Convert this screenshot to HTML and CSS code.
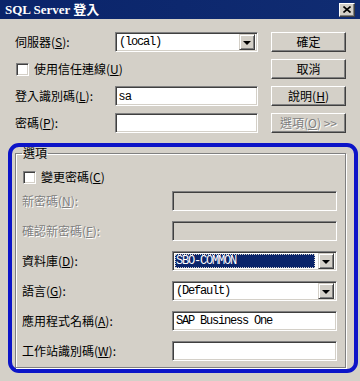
FILE: index.html
```html
<!DOCTYPE html>
<html lang="zh-Hant">
<head>
    <meta charset="UTF-8" />
    <title>SQL Server 登入</title>
    <link rel="stylesheet" href="styles.css">
</head>
<body>
    <div class="titlebar">
        <span class="title">SQL Server 登入</span>
        <span class="close">
            <svg width="8" height="7" viewBox="0 0 8 7"><path d="M0.5 0.5 L7.5 6.5 M7.5 0.5 L0.5 6.5" stroke="#000" stroke-width="1.6"/></svg>
        </span>
    </div>

    <!-- Anmeldung -->
    <div class="login">
        <span class="lbl">伺服器(<u>S</u>):</span>
        <div class="combo sunken"><span class="val mono">(local)</span><span class="arrow"></span></div>
        <span class="btn">確定</span>

        <span class="check span2"><span class="box sunken"></span><span>使用信任連線(<u>U</u>)</span></span>
        <span class="btn">取消</span>

        <span class="lbl">登入識別碼(<u>L</u>):</span>
        <div class="field sunken"><span class="val sans">sa</span></div>
        <span class="btn">說明(<u>H</u>)</span>

        <span class="lbl">密碼(<u>P</u>):</span>
        <div class="field sunken"></div>
        <span class="btn off">選項(<u>O</u>) &gt;&gt;</span>
    </div>

    <!-- Optionen -->
    <div class="mark">
        <fieldset class="options">
            <legend>選項</legend>
            <span class="check"><span class="box sunken"></span><span>變更密碼(<u>C</u>)</span></span>
            <div class="rows">
                <span class="lbl off">新密碼(<u>N</u>):</span>
                <div class="field sunken grey"></div>

                <span class="lbl off">確認新密碼(<u>F</u>):</span>
                <div class="field sunken grey"></div>

                <span class="lbl">資料庫(<u>D</u>):</span>
                <div class="combo sunken"><span class="val mono sel">SBO-COMMON</span><span class="arrow"></span></div>

                <span class="lbl">語言(<u>G</u>):</span>
                <div class="combo sunken"><span class="val mono">(Default)</span><span class="arrow"></span></div>

                <span class="lbl">應用程式名稱(<u>A</u>):</span>
                <div class="field sunken"><span class="val mono">SAP Business One</span></div>

                <span class="lbl">工作站識別碼(<u>W</u>):</span>
                <div class="field sunken"></div>
            </div>
        </fieldset>
    </div>
</body>
</html>
```

FILE: styles.css
```css
body {
    margin: 0;
    width: 360px;
    height: 381px;
    overflow: hidden;
    background-color: #d4d0c8;
    color: #000;
    font-family: "Noto Sans CJK TC", "Liberation Sans", sans-serif;
    font-size: 12px;
    line-height: 14px;
}

.titlebar {
    height: 19px;
    padding: 0 5px;
    display: flex;
    align-items: center;
    justify-content: space-between;
    background: linear-gradient(to right, #0a246a, #102c72);
}

.title {
    color: #fff;
    font-family: "Liberation Serif", "Noto Sans CJK TC", serif;
    font-weight: bold;
    font-size: 13px;
}

.close {
    width: 16px;
    height: 14px;
    box-sizing: border-box;
    display: flex;
    align-items: center;
    justify-content: center;
    background-color: #d4d0c8;
    border: 1px solid;
    border-color: #fff #404040 #404040 #fff;
    box-shadow: inset -1px -1px #808080;
}

/* 3D Rahmen */
.sunken {
    box-sizing: border-box;
    background-color: #fff;
    border: 1px solid;
    border-color: #808080 #fff #fff #808080;
    box-shadow: inset 1px 1px #404040, inset -1px -1px #d4d0c8;
}

.btn {
    height: 20px;
    box-sizing: border-box;
    display: flex;
    align-items: center;
    justify-content: center;
    background-color: #d4d0c8;
    border: 1px solid;
    border-color: #fff #404040 #404040 #fff;
    box-shadow: inset -1px -1px #808080;
}

.off {
    color: #808080;
    text-shadow: 1px 1px 0 #fff;
}

.login {
    display: grid;
    grid-template-columns: 87px 143px 75px;
    grid-auto-rows: 20px;
    column-gap: 13px;
    row-gap: 7px;
    align-items: center;
    padding: 13px 0 0 15px;
}

.span2 {
    grid-column: span 2;
}

.field, .combo {
    height: 20px;
    display: flex;
    align-items: center;
    padding: 2px;
}

.field.grey {
    background-color: #d4d0c8;
}

.val {
    flex: 1;
    padding-left: 1px;
    white-space: nowrap;
    line-height: 14px;
}

.mono {
    font-family: "Liberation Mono", monospace;
    font-size: 12px;
    letter-spacing: -1.2px;
}

.sans {
    font-family: "Liberation Sans", sans-serif;
    font-size: 12px;
}

.sel {
    margin-right: 3px;
    color: #fff;
    background-color: #0a246a;
    outline: 1px dotted #d4d0c8;
    outline-offset: -1px;
}

.arrow {
    width: 16px;
    height: 16px;
    box-sizing: border-box;
    display: flex;
    align-items: center;
    justify-content: center;
    background-color: #d4d0c8;
    border: 1px solid;
    border-color: #d4d0c8 #404040 #404040 #d4d0c8;
    box-shadow: inset 1px 1px #fff, inset -1px -1px #808080;
}

.arrow::after {
    content: "";
    border: 4px solid transparent;
    border-top: 4px solid #000;
    border-bottom: 0;
    margin-top: 1px;
}

.check {
    display: flex;
    align-items: center;
    gap: 5px;
    padding-left: 1px;
}

.box {
    width: 13px;
    height: 13px;
}

/* blaue Markierung */
.mark {
    width: 350px;
    box-sizing: border-box;
    margin: 10px 0 0 8px;
    padding: 0 8px 1px 3px;
    border: 4px solid #0c14c8;
    border-radius: 11px;
}

.options {
    margin: 0;
    padding: 0 8px 6px 6px;
    border: 1px solid #808080;
    box-shadow: 1px 1px 0 #fff, inset 1px 1px 0 #fff;
}

.options legend {
    padding: 0 1px;
    line-height: 12px;
}

.options .check {
    height: 14px;
    margin-top: 11px;
}

.rows {
    display: grid;
    grid-template-columns: 150px 165px;
    grid-auto-rows: 20px;
    row-gap: 10px;
    align-items: center;
    margin-top: 7px;
}
```
